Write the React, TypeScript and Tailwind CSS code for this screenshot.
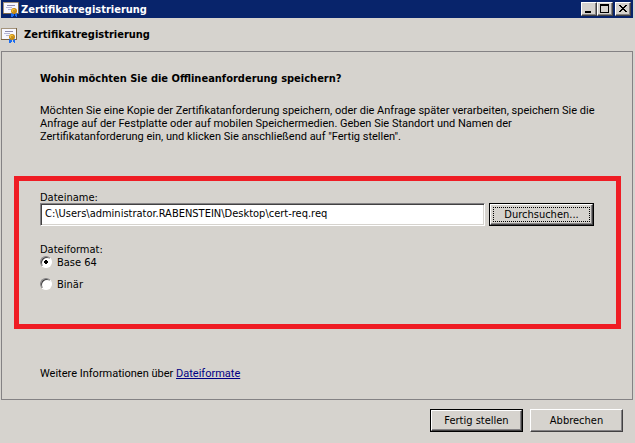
import { useState } from 'react';
import clsx from 'clsx';

const WINDOW_TITLE = 'Zertifikatregistrierung';

const FORMATS = [
  { id: 'base64', label: 'Base 64' },
  { id: 'binary', label: 'Binär' },
];

// Classic raised edge: light on top and left, dark on bottom and right
const RAISED =
  'border border-t-white border-l-white border-r-[#424142] border-b-[#424142] bg-[#d6d3ce] shadow-[inset_-1px_-1px_0_#848284]';

function CertificateIcon() {
  return (
    <svg viewBox="0 0 16 16" className="h-4 w-4 shrink-0" aria-hidden="true">
      <g shapeRendering="crispEdges">
        <rect x="0" y="1" width="16" height="12" fill="#7b6545" />
        <rect x="0" y="1" width="15" height="11" fill="#a5947b" />
        <rect x="1" y="2" width="14" height="10" fill="#f7f7ff" />
        <path d="M4 4h8v1H4z" fill="#8c8aad" />
        <path d="M3 6h6v1H3zM5 8h3v1H5z" fill="#b5b6d6" />
        <path d="M8 12h3v3h-1v1H8zM12 12h2v4h-1v-1h-1z" fill="#1c6df0" />
      </g>
      <circle cx="11" cy="10" r="3" fill="#c98a10" />
      <circle cx="10.500" cy="9.500" r="1.800" fill="#f3c33c" />
      <circle cx="11" cy="10" r="0.800" fill="#8f5a08" />
    </svg>
  );
}

type CaptionButtonProps = {
  label: string;
  path: string;
  className?: string;
};

function CaptionButton({ label, path, className }: CaptionButtonProps) {
  return (
    <button type="button" aria-label={label} className={clsx('h-[14px] w-4', RAISED, className)}>
      <svg viewBox="0 0 14 12" className="h-3 w-[14px]" shapeRendering="crispEdges" aria-hidden="true">
        <path d={path} fill="#000" fillRule="evenodd" />
      </svg>
    </button>
  );
}

type PushButtonProps = {
  children: string;
  isDefault?: boolean;
  focused?: boolean;
  className?: string;
};

function PushButton({ children, isDefault, focused, className }: PushButtonProps) {
  return (
    <button type="button" className={clsx('flex h-[23px] shrink-0', isDefault && 'border border-black', className)}>
      <span className={clsx('flex h-full w-full p-[2px]', RAISED)}>
        <span
          className={clsx(
            'flex w-full items-center justify-center',
            focused && 'border border-dotted border-black',
          )}
        >
          {children}
        </span>
      </span>
    </button>
  );
}

export default function App() {
  const [fileName, setFileName] = useState('C:\\Users\\administrator.RABENSTEIN\\Desktop\\cert-req.req');
  const [format, setFormat] = useState('base64');

  return (
    <div className="flex min-h-screen flex-col border-b border-[#848284] bg-[#d6d3ce] pr-[2px] pl-px font-['DejaVu_Sans_Condensed',Tahoma,sans-serif] text-[11px] leading-[13px] text-black">
      <header className="flex h-[18px] items-center bg-[#08246b] px-[2px] text-white">
        <CertificateIcon />
        <h1 className="ml-[2px] flex-1 font-bold">{WINDOW_TITLE}</h1>
        <CaptionButton label="Minimieren" path="M3 8h6v2H3z" />
        <CaptionButton label="Maximieren" path="M2 1h9v9H2zM3 3v6h7V3z" />
        <CaptionButton
          label="Schließen"
          path="M3 2h2v1h1v1h2V3h1V2h2v1h-1v1H9v1H8v1h1v1h1v1h1v1H9V8H8V7H6v1H5v1H3V8h1V7h1V6h1V5H5V4H4V3H3z"
          className="ml-[2px]"
        />
      </header>

      <div className="flex h-[33px] items-center">
        <CertificateIcon />
        <h2 className="ml-[7px] font-bold">{WINDOW_TITLE}</h2>
      </div>

      <main className="flex-1 border border-[#848284] pt-5">
        <div className="pr-5 pl-[38px]">
          <h3 className="font-bold">Wohin möchten Sie die Offlineanforderung speichern?</h3>
          <p className="mt-[19px] font-[Roboto,Tahoma,sans-serif]">
            Möchten Sie eine Kopie der Zertifikatanforderung speichern, oder die Anfrage später verarbeiten, speichern Sie die
            <br />
            Anfrage auf der Festplatte oder auf mobilen Speichermedien. Geben Sie Standort und Namen der
            <br />
            Zertifikatanforderung ein, und klicken Sie anschließend auf "Fertig stellen".
          </p>
        </div>

        <form className="mt-[33px] mr-[11px] ml-3 h-[153px] border-[5px] border-[#ef1c24] pt-[10px] pr-[22px] pl-[21px]">
          <label htmlFor="file-name" className="block h-3">
            Dateiname:
          </label>
          <div className="flex gap-1">
            <input
              id="file-name"
              type="text"
              value={fileName}
              onChange={(e) => setFileName(e.target.value)}
              className="h-[23px] min-w-0 flex-1 border border-t-[#848284] border-r-white border-b-white border-l-[#848284] bg-white px-1 pb-[2px] shadow-[inset_1px_1px_0_#424142,inset_-1px_-1px_0_#d6d3ce] outline-none"
            />
            <PushButton isDefault focused className="w-[105px]">
              Durchsuchen...
            </PushButton>
          </div>

          <fieldset className="mt-[17px]">
            <legend>Dateiformat:</legend>
            <div className="flex flex-col items-start gap-[9px]">
              {FORMATS.map(({ id, label }) => (
                <label key={id} className="flex gap-[5px]">
                  <input
                    type="radio"
                    name="format"
                    checked={format === id}
                    onChange={() => setFormat(id)}
                    className="h-3 w-3 appearance-none rounded-full border border-t-[#848284] border-r-white border-b-white border-l-[#848284] bg-white shadow-[inset_1px_1px_0_#424142] checked:bg-[radial-gradient(circle,#000_2px,#fff_2px)]"
                  />
                  {label}
                </label>
              ))}
            </div>
          </fieldset>
        </form>

        <p className="mt-[38px] mb-[19px] px-[38px] font-[Roboto,Tahoma,sans-serif]">
          Weitere Informationen über{' '}
          <a href="#dateiformate" className="text-[#000084] underline">
            Dateiformate
          </a>
        </p>
      </main>

      <footer className="flex justify-end gap-[7px] px-[10px] pt-[9px] pb-[11px]">
        <PushButton isDefault className="w-[93px]">
          Fertig stellen
        </PushButton>
        <PushButton className="w-[93px]">Abbrechen</PushButton>
      </footer>
    </div>
  );
}
